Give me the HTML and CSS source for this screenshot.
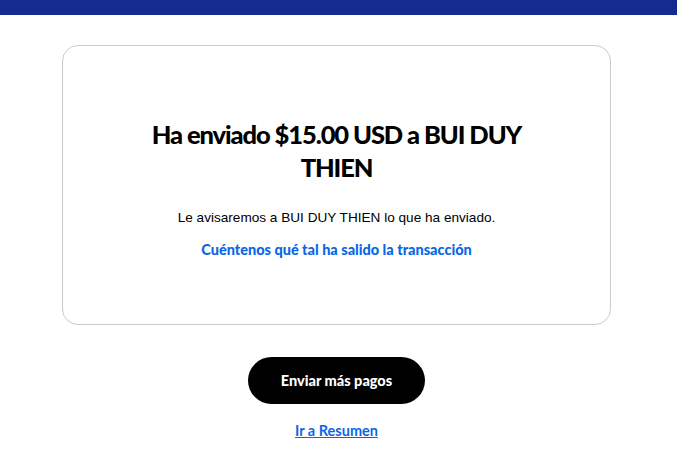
FILE: index.html
```html
<!DOCTYPE html>
<html lang="es">
<head>
    <meta charset="UTF-8">
    <meta name="viewport" content="width=device-width, initial-scale=1.0">
    <title>Pago enviado</title>
    <link rel="stylesheet" href="styles.css">
</head>
<body>
    <div class="top-bar"></div>
    <main class="page">
        <section class="card">
            <h1>Ha enviado $15.00 USD a BUI DUY THIEN</h1>
            <p class="note">Le avisaremos a BUI DUY THIEN lo que ha enviado.</p>
            <a class="feedback" href="#">Cuéntenos qué tal ha salido la transacción</a>
        </section>
        <button type="button" class="primary">Enviar más pagos</button>
        <a class="summary" href="#">Ir a Resumen</a>
    </main>
</body>
</html>
```

FILE: styles.css
```css
body {
    margin: 0;
    background-color: #fff;
    color: #000;
    font-family: "Liberation Sans", Arial, sans-serif;
}
.top-bar {
    height: 15px;
    background-color: #142c8e;
}
.page {
    width: 549px;
    margin: 30px 0 0 62px;
    display: flex;
    flex-direction: column;
    align-items: center;
}
.card {
    box-sizing: border-box;
    width: 100%;
    height: 280px;
    border: 1px solid #cccccc;
    border-radius: 16px;
    padding: 72px 40px 0;
    text-align: center;
}
h1 {
    margin: 0 auto;
    max-width: 390px;
    font-family: Lato, "Noto Sans", sans-serif;
    font-weight: 900;
    font-size: 25.5px;
    line-height: 33px;
    letter-spacing: -1.1px;
}
.note {
    margin: 24px 0 0;
    font-size: 13.6px;
    line-height: 20px;
}
.feedback {
    display: inline-block;
    margin-top: 13px;
    font-family: Lato, "Noto Sans", sans-serif;
    font-weight: 900;
    font-size: 14.5px;
    color: #0a66e8;
    text-decoration: none;
}
.primary {
    margin-top: 32px;
    width: 177px;
    height: 47px;
    border: none;
    border-radius: 24px;
    background-color: #000;
    color: #fff;
    font-family: Lato, "Noto Sans", sans-serif;
    font-weight: 900;
    font-size: 14.5px;
    cursor: pointer;
}
.summary {
    margin-top: 18px;
    font-family: Lato, "Noto Sans", sans-serif;
    font-weight: 700;
    font-size: 14.5px;
    color: #0a66e8;
    text-decoration: underline;
}
```
